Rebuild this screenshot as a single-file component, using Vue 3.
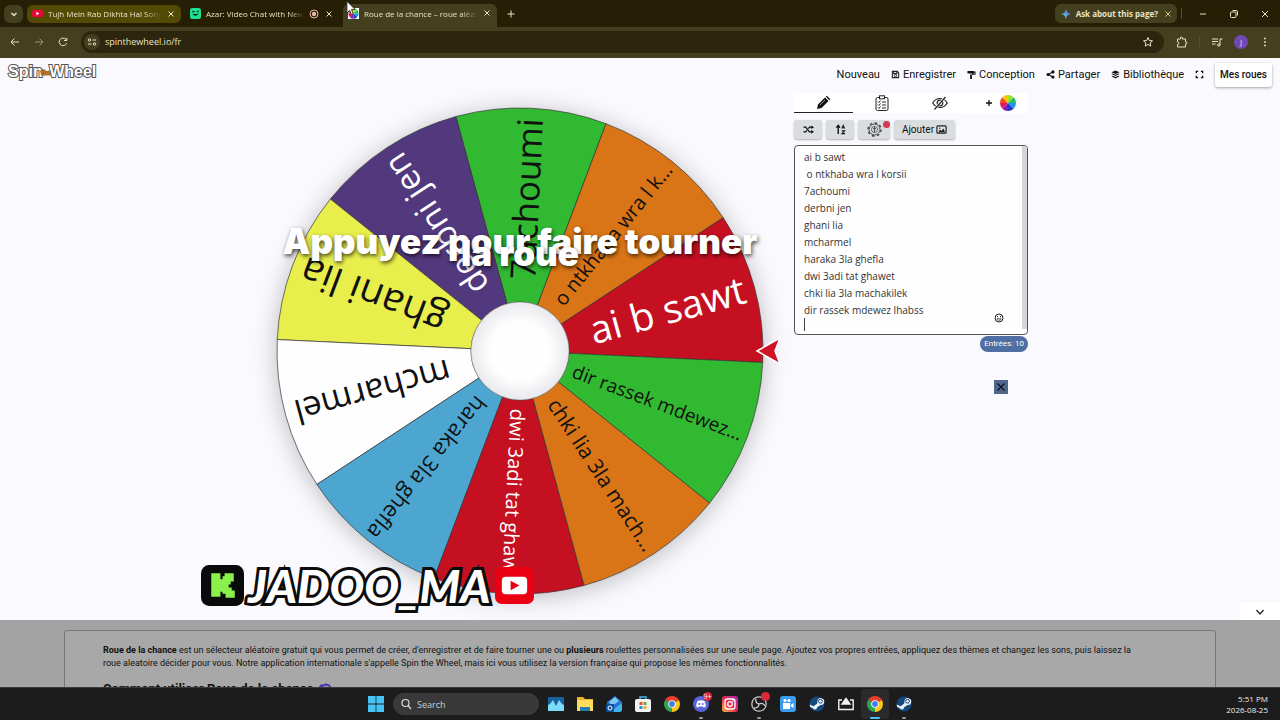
<template>
  <div class="screen">
    <header class="browser">
      <div class="tab-strip">
        <button class="tab-search" aria-label="Search tabs">
          <svg viewBox="0 0 10 10" width="10" height="10"><path d="M2.500 4 5 6.500 7.500 4" class="line line--bold" /></svg>
        </button>
        <div v-for="tab in tabs" :key="tab.title" class="tab" :class="`tab--${tab.kind}`">
          <svg v-if="tab.kind === 'music'" class="tab-icon" viewBox="0 0 12 12">
            <rect y="2" width="12" height="8" rx="2.500" fill="#e5093a" />
            <path d="M4.800 4v4l3.200-2z" fill="#fff" />
          </svg>
          <svg v-else-if="tab.kind === 'chat'" class="tab-icon" viewBox="0 0 12 12">
            <rect width="12" height="12" rx="2.500" fill="#1fe090" />
            <path d="M2.500 4h2.500M7.500 4l2-.8" stroke="#10251a" stroke-width="1.200" />
            <path d="M2.600 6.200c1.500 3.200 5.600 2.600 6.800-.6-2 1-4.500 1.200-6.800.6z" fill="#10251a" />
          </svg>
          <svg v-else class="tab-icon" viewBox="0 0 12 12">
            <rect width="12" height="12" fill="#fff" />
            <path v-for="(c, i) in rainbow" :key="c" :d="sector(i * 45, 45, 0, 5.6)" :fill="c" transform="translate(6 6)" />
          </svg>
          <span class="tab-title">{{ tab.title }}</span>
          <svg v-if="tab.kind === 'chat'" class="tab-rec" viewBox="0 0 10 10">
            <circle cx="5" cy="5" r="4" fill="none" stroke="#e8b9a0" />
            <circle cx="5" cy="5" r="2.200" fill="#e8b9a0" />
          </svg>
          <button class="tab-close" :aria-label="`Close ${tab.title}`">
            <svg viewBox="0 0 8 8" width="8" height="8"><path d="m1.500 1.500 5 5m0-5-5 5" class="line" /></svg>
          </button>
        </div>
        <button class="bare new-tab" aria-label="New tab">
          <svg viewBox="0 0 10 10" width="10" height="10"><path d="M5 1.500v7M1.500 5h7" class="line" /></svg>
        </button>
        <div class="ask">
          <svg viewBox="0 0 10 10" width="10" height="10">
            <path d="M5 0c.5 3 2 4.500 5 5-3 .5-4.500 2-5 5-.5-3-2-4.500-5-5 3-.5 4.500-2 5-5z" fill="#5b93f0" />
            <path d="M5 5 0 5c3 .5 4.500 2 5 5z" fill="#5fc183" />
          </svg>
          <span>Ask about this page?</span>
          <button class="tab-close" aria-label="Dismiss">
            <svg viewBox="0 0 8 8" width="8" height="8"><path d="m1.500 1.500 5 5m0-5-5 5" class="line line--gold" /></svg>
          </button>
        </div>
        <span class="rule"></span>
        <div class="window-controls">
          <button class="bare" aria-label="Minimize"><svg viewBox="0 0 10 10" width="10" height="10"><path d="M2 5h6" class="line" /></svg></button>
          <button class="bare" aria-label="Restore">
            <svg viewBox="0 0 10 10" width="10" height="10"><rect x="1.500" y="3" width="5.500" height="5.500" rx="1" class="line" /><path d="M3.500 1.500H7A1.500 1.500 0 0 1 8.500 3v3.500" class="line" /></svg>
          </button>
          <button class="bare" aria-label="Close"><svg viewBox="0 0 10 10" width="10" height="10"><path d="m2 2 6 6m0-6-6 6" class="line" /></svg></button>
        </div>
      </div>

      <div class="toolbar">
        <button class="bare" aria-label="Back"><svg viewBox="0 0 12 12" width="12" height="12"><path d="M10 6H2.500M5.500 2.500 2 6l3.500 3.500" class="line" /></svg></button>
        <button class="bare faded" aria-label="Forward"><svg viewBox="0 0 12 12" width="12" height="12"><path d="M2 6h7.500M6.500 2.500 10 6 6.500 9.500" class="line" /></svg></button>
        <button class="bare" aria-label="Reload"><svg viewBox="0 0 12 12" width="12" height="12"><path d="M9.600 7.200A3.800 3.800 0 1 1 9 3.500l.6.8M9.800 1.800v2.700H7.100" class="line" /></svg></button>
        <div class="omnibox">
          <button class="site-info" aria-label="Site information">
            <svg viewBox="0 0 10 10" width="10" height="10"><circle cx="2.500" cy="3" r="1.200" class="line" /><path d="M5.500 3h3.500M1 7h3.500" class="line" /><circle cx="7.500" cy="7" r="1.200" class="line" /></svg>
          </button>
          <input v-model="address" class="address" aria-label="Address" />
          <button class="bare" aria-label="Bookmark">
            <svg viewBox="0 0 12 12" width="12" height="12"><path d="m6 1.500 1.300 3 3.200.3-2.400 2.100.7 3.200L6 8.400l-2.800 1.700.7-3.200L1.500 4.800l3.200-.3z" class="line" /></svg>
          </button>
        </div>
        <div class="toolbar-end">
          <button class="bare" aria-label="Extensions">
            <svg viewBox="0 0 12 12" width="12" height="12"><path d="M1.500 3h3V2a1 1 0 0 1 2 0v1h3v3h.5a1 1 0 0 1 0 2h-.5v3h-8V8.500a1.300 1.300 0 0 0 0-2.600z" class="line" /></svg>
          </button>
          <span class="rule"></span>
          <button class="bare" aria-label="Media">
            <svg viewBox="0 0 12 12" width="12" height="12"><path d="M1 3h6M1 5.500h6M1 8h3.500M9 9V3h2.500" class="line" /><circle cx="7.800" cy="9" r="1.200" class="line" /></svg>
          </button>
          <button class="avatar">J</button>
          <button class="bare" aria-label="Menu">
            <svg viewBox="0 0 12 12" width="12" height="12" fill="#e9e3c5"><circle cx="6" cy="2.500" r=".9" /><circle cx="6" cy="6" r=".9" /><circle cx="6" cy="9.500" r=".9" /></svg>
          </button>
        </div>
      </div>
      <svg class="cursor" viewBox="0 0 12 18"><path d="M1 1v13l3-3 2 5 2-1-2-5h4z" fill="#fff" stroke="#222" /></svg>
    </header>

    <div class="page">
      <div class="app">
        <div class="site-header">
          <a class="logo" href="#" aria-label="Spin the Wheel">
            <span>Spin</span><small>the</small><span>Wheel</span>
          </a>
          <nav class="site-nav">
            <a href="#">Nouveau</a>
            <a href="#">
              <svg viewBox="0 0 10 10"><path d="M1.500 1.500h5.500l1.500 1.500v5.500h-7zM3 1.500v2.500h3.500V1.500" fill="none" stroke="#222" stroke-width="1.200" /><circle cx="5" cy="6.300" r="1.300" fill="none" stroke="#222" /></svg>
              Enregistrer
            </a>
            <a href="#">
              <svg viewBox="0 0 10 10"><path d="M.5 1h7v3h-7zM7.500 1.800H9.500v3.500H5" fill="#111" /><rect x="3.500" y="5" width="2" height="5" fill="#111" /><path d="M7.500 3h1v1.300h-1z" fill="#fafafe" /></svg>
              Conception
            </a>
            <a href="#">
              <svg viewBox="0 0 10 10" fill="#111"><circle cx="2.300" cy="5" r="1.800" /><circle cx="7.700" cy="2.200" r="1.800" /><circle cx="7.700" cy="7.800" r="1.800" /><path d="m2.300 5 5.400-2.800M2.300 5l5.400 2.800" stroke="#111" stroke-width="1.200" /></svg>
              Partager
            </a>
            <a href="#">
              <svg viewBox="0 0 10 10" fill="#111"><path d="m5 .5 4.500 2L5 4.500.5 2.500zM.5 4.500l1.300-.6L5 5.400l3.200-1.500 1.300.6L5 6.800zM.5 7l1.300-.6L5 7.900l3.200-1.500 1.300.6L5 9.500z" /></svg>
              Bibliothèque
            </a>
            <button class="bare" aria-label="Plein écran">
              <svg viewBox="0 0 10 10"><path d="M1.500 3.500v-2h2m3 0h2v2m0 3v2h-2m-3 0h-2v-2" fill="none" stroke="#111" stroke-width="1.500" /></svg>
            </button>
            <button class="my-wheels">Mes roues</button>
          </nav>
        </div>

        <main class="workspace">
          <svg class="wheel" viewBox="-258 -258 516 516" role="img" aria-label="Roue de la chance">
            <defs>
              <radialGradient id="hub">
                <stop offset="0.6" stop-color="#fefefe" />
                <stop offset="1" stop-color="#e9e9ee" />
              </radialGradient>
            </defs>
            <circle class="wheel-shadow" r="243" fill="#fff" />
            <path
              v-for="slice in slices"
              :key="slice.label"
              :d="sector(slice.angle - step / 2, step, 49, 243)"
              :fill="slice.fill"
              stroke="#333"
              stroke-opacity="0.7"
            />
            <text
              v-for="slice in slices"
              :key="slice.label"
              class="slice-label"
              :transform="`rotate(${slice.angle})`"
              :x="slice.end"
              :y="slice.size * 0.34"
              :font-size="slice.size"
              :fill="slice.ink"
            >{{ slice.label }}</text>
            <circle r="49" fill="url(#hub)" stroke="#777" stroke-opacity="0.5" />
            <path d="M237 0 260-13 255 0l5 13z" fill="#d01426" stroke="#fff" stroke-width="1.500" />
            <g class="prompt">
              <text y="-97">Appuyez pour faire tourner</text>
              <text y="-85">la roue</text>
            </g>
          </svg>

          <section class="panel">
            <div class="panel-tabs">
              <button class="panel-tab panel-tab--active" aria-label="Modifier">
                <svg viewBox="0 0 16 16"><path d="m2 14 1-4.500L10 2.500l3.500 3.500-7 7z" fill="#111" /><path d="m10.800 1.700 1-1 3.500 3.500-1 1z" fill="#111" /><path d="m5 10 5-5" stroke="#999" /></svg>
              </button>
              <button class="panel-tab" aria-label="Liste">
                <svg viewBox="0 0 16 16" fill="none" stroke="#222"><rect x="2" y="2.500" width="12" height="13" rx="1.500" /><rect x="5.500" y=".8" width="5" height="3" fill="#fff" /><path d="m4 6.500 1 1 1.500-2M4 9.500l1 1 1.500-2M4 12.500l1 1 1.500-2M8 7h4M8 10h4M8 13h4" /></svg>
              </button>
              <button class="panel-tab" aria-label="Masquer">
                <svg viewBox="0 0 16 16" fill="none" stroke="#222" stroke-width="1.200"><path d="M.8 8C4 2 12 2 15.200 8 12 14 4 14 .8 8z" /><circle cx="8" cy="8" r="2.800" /><path d="M13.500 1.500 3 14" stroke="#fff" stroke-width="2.500" /><path d="M13.500 2 2.500 14.500" /></svg>
              </button>
              <button class="panel-tab panel-tab--add" aria-label="Ajouter une roue">
                <svg class="plus" viewBox="0 0 8 8"><path d="M4 1v6M1 4h6" stroke="#111" stroke-width="1.300" /></svg>
                <svg viewBox="-8 -8 16 16"><path v-for="(c, i) in rainbow" :key="c" :d="sector(i * 45, 45, 0, 8)" :fill="c" /></svg>
              </button>
            </div>
            <div class="tools">
              <button class="tool" aria-label="Mélanger">
                <svg viewBox="0 0 12 12"><path d="M.5 3.500H3L7 8.500h3M.5 8.500H3l1.200-1.500M6 5l1-1.500h3" fill="none" stroke="#111" stroke-width="1.400" /><path d="M9 1.500v4l3-2zM9 6.500v4l3-2z" fill="#111" /></svg>
              </button>
              <button class="tool" aria-label="Trier">
                <svg viewBox="0 0 12 12" fill="none" stroke="#111"><path d="M3.500 11V2M1.500 4l2-2.500 2 2.500" stroke-width="1.500" /><path d="M7.500 5 9 1.500 10.500 5M8 4h2M7.500 7.500h3l-3 3h3.500" stroke-width="1.100" /></svg>
              </button>
              <button class="tool tool--wide" aria-label="Réglages">
                <svg class="gear" viewBox="0 0 16 16" fill="none" stroke="#444"><circle cx="8" cy="8" r="7" stroke-width="1.500" stroke-dasharray="2.800 2.700" /><circle cx="8" cy="8" r="5.800" /><circle cx="8" cy="8" r="3.300" stroke-width=".8" /><path d="M8 5v6M6.500 7h3" /></svg>
                <i class="alert"></i>
              </button>
              <button class="tool tool--add">
                Ajouter
                <svg viewBox="0 0 12 12"><rect x="1" y="2" width="10" height="8" rx="1" fill="none" stroke="#222" stroke-width="1.300" /><path d="m2.500 9 2-3L6 7.500 8 5l2 4z" fill="#222" /><circle cx="4" cy="4.500" r=".8" fill="#222" /></svg>
              </button>
            </div>
            <div class="entries">
              <textarea v-model="entries" aria-label="Entrées" spellcheck="false"></textarea>
              <span class="caret"></span>
              <span class="scroll-track"></span>
              <button class="bare emoji" aria-label="Emoji">
                <svg viewBox="0 0 10 10" fill="none" stroke="#222"><circle cx="5" cy="5" r="4" /><path d="M2.800 5.800c.8 2 3.600 2 4.400 0z" stroke-width=".7" /><path d="M3.500 3v1.200m3-1.200v1.200" /></svg>
              </button>
            </div>
            <span class="count">Entrées: {{ names.length }}</span>
            <button class="dismiss" aria-label="Fermer">
              <svg viewBox="0 0 10 10" width="10" height="10"><path d="m1.500 1.500 7 7m0-7-7 7" stroke="#0b1222" stroke-width="1.200" /></svg>
            </button>
          </section>
        </main>
        <button class="scroll-down" aria-label="Défiler">
          <svg viewBox="0 0 10 10" width="10" height="10"><path d="m1.500 3 3.500 4 3.500-4" fill="none" stroke="#222" stroke-width="1.300" /></svg>
        </button>

        <div class="watermark">
          <svg class="badge" viewBox="0 0 42 40">
            <rect width="42" height="40" rx="8" fill="#080b09" />
            <path d="M10 8h9v6h2v-3h2V8h9v8h-3v3h-2v3h3v3h3v7h-9v-4h-3v-2h-2v5h-9z" fill="#8cf04a" />
          </svg>
          <strong>JADOO_MA</strong>
          <svg class="badge badge--video" viewBox="0 0 40 38">
            <rect width="40" height="38" rx="7" fill="#ea0012" />
            <rect x="7" y="10" width="26" height="18" rx="4" fill="#fff" />
            <path d="M16 14v10l9-5z" fill="#ea0012" />
          </svg>
        </div>
      </div>

      <div class="about">
        <article>
          <p>
            <b>Roue de la chance</b> est un sélecteur aléatoire gratuit qui vous permet de créer, d'enregistrer et de faire tourner une ou
            <b>plusieurs</b> roulettes personnalisées sur une seule page. Ajoutez vos propres entrées, appliquez des thèmes et changez les sons, puis laissez la
            roue aleatoire décider pour vous. Notre application internationale s'appelle Spin the Wheel, mais ici vous utilisez la version française qui propose les mêmes fonctionnalités.
          </p>
          <h2>
            Comment utiliser Roue de la chance
            <svg viewBox="0 0 14 12" fill="none" stroke="#4a36a8" stroke-width="2"><circle cx="8" cy="6" r="4.500" /><circle cx="8" cy="6" r="1.500" /><path d="M1 9c0-4 1-6 3-7" /></svg>
          </h2>
        </article>
      </div>
    </div>

    <footer class="taskbar">
      <div class="task-icons">
        <button class="task" aria-label="Start">
          <svg viewBox="0 0 16 16" fill="#45c3f4"><path d="M0 0h7.600v7.600H0zM8.400 0H16v7.600H8.400zM0 8.400h7.600V16H0zM8.400 8.400H16V16H8.400z" /></svg>
        </button>
        <label class="search">
          <svg viewBox="0 0 12 12" width="12" height="12" fill="none" stroke="#ddd" stroke-width="1.200"><circle cx="5.500" cy="5" r="3.500" /><path d="m8 7.500 3 3.500" /></svg>
          <input type="text" placeholder="Search" aria-label="Search" />
        </label>
        <button v-for="(app, i) in apps" :key="i" class="task" :class="{ 'task--open': app.open, 'task--active': app.active }" :aria-label="app.name">
          <svg v-if="app.name === 'Monitor'" viewBox="0 0 16 16"><rect y="1" width="16" height="14" rx="1" fill="#17639b" /><path d="M0 15V9l2-1 3-4 2 4 1 2 1-2 2-4 3 4 2 1v6z" fill="#7cdcfb" /></svg>
          <svg v-else-if="app.name === 'Files'" viewBox="0 0 16 16"><path d="M0 1h6l2 2h8v12H0z" fill="#e9b52c" /><path d="M0 4h16v11H0z" fill="#ffdb5e" /><path d="M3 15v-4h10v4z" fill="#237fb3" /></svg>
          <svg v-else-if="app.name === 'Outlook'" viewBox="0 0 16 16"><path d="m1 6 8-6 7 6v8a2 2 0 0 1-2 2H3a2 2 0 0 1-2-2z" fill="#2473ce" /><path d="m3 6 6-5 4 4-7 5z" fill="#7cc8f5" /><path d="m16 7-12 9h10l2-2z" fill="#45b2ec" /><rect y="8" width="8" height="8" rx="1" fill="#0c4e9c" /><circle cx="4" cy="12" r="2" fill="none" stroke="#fff" /></svg>
          <svg v-else-if="app.name === 'Store'" viewBox="0 0 16 16"><path d="M5 4V1h6v3" fill="none" stroke="#46b5ed" stroke-width="1.500" /><rect y="3" width="16" height="13" rx="2" fill="#f1f2f4" /><path d="M4.500 6h3v3h-3z" fill="#e5532c" /><path d="M8.500 6h3v3h-3z" fill="#6ca62c" /><path d="M4.500 10h3v3h-3z" fill="#2a91d8" /><path d="M8.500 10h3v3h-3z" fill="#eeb424" /></svg>
          <svg v-else-if="app.name === 'Chrome'" viewBox="-8 -8 16 16"><path d="M0 0-6.900-4A8 8 0 0 1 6.900-4z" fill="#e5402f" /><path d="M0 0 6.900-4A8 8 0 0 1 0 8z" fill="#fbc61a" /><path d="M0 0v8a8 8 0 0 1-6.900-12z" fill="#2fa451" /><circle r="3.800" fill="#fff" /><circle r="2.900" fill="#3f7fe8" /></svg>
          <svg v-else-if="app.name === 'Discord'" viewBox="0 0 16 16"><circle cx="8" cy="8" r="8" fill="#5865d8" /><path d="M4.500 5Q8 3.500 11.500 5q1.500 3 1.300 5.500l-2 1.200-.8-1.200H6l-.8 1.200-2-1.200Q3 8 4.500 5z" fill="#fff" /><circle cx="6.300" cy="8" r="1" fill="#5865d8" /><circle cx="9.700" cy="8" r="1" fill="#5865d8" /></svg>
          <svg v-else-if="app.name === 'Instagram'" viewBox="0 0 16 16"><defs><linearGradient id="insta" x1="0" y1="1" x2="1" y2="0"><stop stop-color="#fdbb45" /><stop offset=".5" stop-color="#e8274f" /><stop offset="1" stop-color="#a32bb6" /></linearGradient></defs><rect width="16" height="16" rx="3" fill="url(#insta)" /><g fill="none" stroke="#fff" stroke-width="1.300"><rect x="3" y="3" width="10" height="10" rx="2.500" /><circle cx="8" cy="8" r="2.300" /></g><circle cx="11" cy="5" r=".7" fill="#fff" /></svg>
          <svg v-else-if="app.name === 'OBS'" viewBox="0 0 16 16"><g fill="none" stroke="#c9c9c9" stroke-width="1.300"><circle cx="8" cy="8" r="7.200" /><path d="M8 8q-4-1-3-5M8 8q4-2 6 2M8 8q0 4-5 4" /></g></svg>
          <svg v-else-if="app.name === 'Camera'" viewBox="0 0 16 16"><rect width="16" height="16" rx="3" fill="#3b9cf0" /><path d="M3 7h7v6H3zM10.500 9l3-2v5l-3-2z" fill="#fff" /><circle cx="5" cy="4.500" r="1.600" fill="#fff" /><circle cx="9" cy="4.500" r="1.600" fill="#fff" /></svg>
          <svg v-else-if="app.name === 'Steam'" viewBox="0 0 16 16"><circle cx="8" cy="8" r="7.500" fill="#14477c" /><path d="m.6 8.500 4 1.700 3.600-2.800.3-2.400a3.400 3.400 0 1 1 3 3.900L8.200 11.200a2.400 2.400 0 0 1-4.600.9L1.200 11z" fill="#eaf2f8" /><circle cx="11.500" cy="5.300" r="1.900" fill="none" stroke="#14477c" /></svg>
          <svg v-else viewBox="0 0 16 16" fill="none" stroke="#f1f1f1" stroke-width="1.400"><path d="M4 4H.8v9.500h14.400V4H12" /><path d="M8 2.500 12 8H4z" fill="#f1f1f1" /></svg>
          <span v-if="app.badge !== undefined" class="task-badge">{{ app.badge }}</span>
        </button>
      </div>
      <time class="clock" datetime="2026-08-25T17:51"><span>5:51 PM</span><span>2026-08-25</span></time>
    </footer>
  </div>
</template>

<script setup>
import { ref, computed } from "vue";

const tabs = [
  { kind: "music", title: "Tujh Mein Rab Dikhta Hai Song" },
  { kind: "chat", title: "Azar: Video Chat with New" },
  { kind: "wheel", title: "Roue de la chance – roue aléato" }
];

const address = ref("spinthewheel.io/fr");

const entries = ref(
  [
    "ai b sawt",
    " o ntkhaba wra l korsii",
    "7achoumi",
    "derbni jen",
    "ghani lia",
    "mcharmel",
    "haraka 3la ghefla",
    "dwi 3adi tat ghawet",
    "chki lia 3la machakilek",
    "dir rassek mdewez lhabss",
    ""
  ].join("\n")
);

const palette = [
  { fill: "#c51022", ink: "#fff" },
  { fill: "#d97516", ink: "#111" },
  { fill: "#32b932", ink: "#111" },
  { fill: "#52387d", ink: "#fff" },
  { fill: "#e8ef4c", ink: "#111" },
  { fill: "#fefefe", ink: "#111" },
  { fill: "#4ca6d0", ink: "#111" }
];

const labelSizes = [39, 20, 35, 34, 39, 34, 22, 20, 21, 19];

const rainbow = ["#2196e8", "#2638c8", "#7a1fb0", "#e01860", "#f04a18", "#ffc400", "#9be02a", "#20c060"];

const names = computed(() =>
  entries.value
    .split("\n")
    .map((name) => name.trim())
    .filter(Boolean)
);

const step = computed(() => 360 / names.value.length);

const slices = computed(() =>
  names.value.map((name, i) => {
    const label = name.length > 17 ? `${name.slice(0, 17)}...` : name;
    return {
      label,
      angle: -15.3 - i * step.value,
      size: labelSizes[i] ?? 20,
      end: label.length > 14 ? 237 : 233,
      ...palette[i % palette.length]
    };
  })
);

const point = (deg, r) => {
  const a = (deg * Math.PI) / 180;
  return `${(r * Math.cos(a)).toFixed(2)} ${(r * Math.sin(a)).toFixed(2)}`;
};

// ring segment starting at `start` degrees, clockwise
const sector = (start, sweep, inner, outer) =>
  `M${point(start, inner)}L${point(start, outer)}` +
  `A${outer} ${outer} 0 0 1 ${point(start + sweep, outer)}` +
  `L${point(start + sweep, inner)}` +
  (inner ? `A${inner} ${inner} 0 0 0 ${point(start, inner)}Z` : "Z");

const apps = [
  { name: "Monitor" },
  { name: "Files" },
  { name: "Outlook" },
  { name: "Store" },
  { name: "Chrome" },
  { name: "Discord", open: true, badge: "9+" },
  { name: "Instagram" },
  { name: "OBS", open: true, badge: "" },
  { name: "Camera" },
  { name: "Steam" },
  { name: "Cast" },
  { name: "Chrome", open: true, active: true },
  { name: "Steam", open: true }
];
</script>

<style>
body {
  overflow: hidden;
}
</style>

<style scoped>
* {
  box-sizing: border-box;
}

.screen {
  height: 100vh;
  display: flex;
  flex-direction: column;
  font-family: Roboto, "Liberation Sans", sans-serif;
  color: #111;
}

button {
  display: flex;
  align-items: center;
  justify-content: center;
  padding: 0;
  border: 0;
  background: none;
  font: inherit;
  color: inherit;
}

svg {
  display: block;
  flex: none;
}

.line {
  fill: none;
  stroke: #e9e3c5;
}

.line--bold {
  stroke-width: 1.5;
}

.line--gold {
  stroke: #d6cb6c;
}

/* browser */
.browser {
  position: relative;
  background: #261f06;
  color: #e9e3c5;
  font-family: "Open Sans", "Noto Sans", sans-serif;
  font-size: 9px;
}

.tab-strip {
  display: flex;
  align-items: center;
  gap: 4px;
  height: 27px;
  padding: 0 10px 0 4px;
  font-size: 8px;
}

.tab-search {
  width: 19px;
  height: 18px;
  border-radius: 6px;
  background: #443f1f;
}

.tab {
  display: flex;
  align-items: center;
  gap: 5px;
  width: 154px;
  height: 18px;
  padding: 0 6px 0 5px;
  border-radius: 6px;
}

.tab--music {
  background: #524a05;
}

.tab--wheel {
  align-self: flex-end;
  height: 23px;
  padding-bottom: 5px;
  border-radius: 6px 6px 0 0;
  background: #443f1f;
}

.tab-icon {
  width: 11px;
  height: 11px;
}

.tab-title {
  flex: 1;
  overflow: hidden;
  white-space: nowrap;
  mask-image: linear-gradient(to right, #000 86%, transparent);
}

.tab-rec {
  width: 10px;
  height: 10px;
}

.tab-close {
  width: 9px;
  height: 12px;
}

.new-tab {
  margin-left: 5px;
}

.ask {
  display: flex;
  align-items: center;
  gap: 5px;
  height: 19px;
  margin-left: auto;
  padding: 0 5px 0 6px;
  border-radius: 6px;
  background: #443f1f;
  font-weight: 700;
}

.rule {
  width: 1px;
  height: 11px;
  background: #57502c;
}

.window-controls {
  display: flex;
  gap: 21px;
  margin-left: 12px;
}

.toolbar {
  display: flex;
  align-items: center;
  gap: 12px;
  height: 31px;
  padding: 0 9px 2px;
  background: #443f1f;
}

.toolbar-end {
  display: flex;
  align-items: center;
  gap: 11px;
}

.faded {
  opacity: 0.5;
}

.omnibox {
  flex: 1;
  display: flex;
  align-items: center;
  gap: 5px;
  height: 22px;
  padding: 0 10px 0 3px;
  border-radius: 11px;
  background: #2d260e;
}

.site-info {
  width: 16px;
  height: 16px;
  border-radius: 50%;
  background: #443f1f;
}

.address {
  flex: 1;
  min-width: 0;
  padding: 0;
  border: 0;
  outline: 0;
  background: none;
  color: inherit;
  font: inherit;
}

.avatar {
  width: 14px;
  height: 14px;
  border-radius: 50%;
  background: #7147b5;
  font-size: 8px;
}

.cursor {
  position: absolute;
  top: 0;
  left: 346px;
  width: 11px;
  height: 17px;
}

/* page */
.page {
  flex: 1;
  min-height: 0;
  overflow: hidden;
  background: #a3a3a3;
}

.app {
  position: relative;
  background: #fafafe;
}

.site-header {
  display: flex;
  align-items: center;
  justify-content: space-between;
  height: 33px;
  padding: 0 8px;
}

.logo {
  display: flex;
  align-items: center;
  margin-top: -5px;
  font: bold 16px "Liberation Sans", Arial, sans-serif;
  color: #fff;
  text-decoration: none;
  -webkit-text-stroke: 2px #555;
  paint-order: stroke;
}

.logo small {
  margin: 0 -2px;
  font-size: 7px;
  color: #d08a1c;
  -webkit-text-stroke: 1px #6b4a17;
}

.site-nav {
  display: flex;
  align-items: center;
  gap: 11px;
  font-size: 11px;
}

.site-nav a {
  display: flex;
  align-items: center;
  gap: 3px;
  color: inherit;
  text-decoration: none;
}

.site-nav svg {
  width: 9px;
  height: 9px;
}

.my-wheels {
  height: 24px;
  padding: 0 5px;
  border-radius: 3px;
  background: #fff;
  box-shadow: 0 1px 3px rgba(0, 0, 0, 0.35);
  font-size: 10px;
  font-weight: 500;
}

.workspace {
  display: flex;
  justify-content: center;
  gap: 16px;
  height: 529px;
  padding: 2px 0 0 10px;
}

.wheel {
  width: 516px;
  height: 516px;
  overflow: visible;
}

.wheel-shadow {
  filter: drop-shadow(0 3px 12px rgba(0, 0, 0, 0.25));
}

.slice-label {
  font-family: "Open Sans", "Noto Sans", sans-serif;
  text-anchor: end;
}

.prompt {
  fill: #fff;
  font: 900 35px Inter, "Open Sans", sans-serif;
  text-anchor: middle;
  text-shadow: 1px 2px 4px rgba(0, 0, 0, 0.7);
}

.panel {
  display: flex;
  flex-direction: column;
  width: 234px;
}

.panel-tabs {
  display: grid;
  grid-template-columns: repeat(4, 1fr);
  height: 20px;
  background: #fff;
}

.panel-tab {
  gap: 7px;
}

.panel-tab svg {
  width: 16px;
  height: 16px;
}

.panel-tab .plus {
  width: 8px;
  height: 8px;
}

.panel-tab--active {
  border-bottom: 1px solid #222;
}

.panel-tab--add {
  padding-left: 4px;
}

.tools {
  display: flex;
  gap: 4px;
  margin: 7px 0 6px;
}

.tool {
  position: relative;
  gap: 2px;
  width: 28px;
  height: 19px;
  border-radius: 3px;
  background: #dadde0;
  box-shadow: 0 1px 2px rgba(0, 0, 0, 0.3);
  font-size: 10px;
}

.tool svg {
  width: 11px;
  height: 11px;
}

.tool .gear {
  width: 15px;
  height: 15px;
}

.tool--wide {
  width: 32px;
}

.tool--add {
  width: 61px;
}

.alert {
  position: absolute;
  top: 1px;
  right: 0;
  width: 7px;
  height: 7px;
  border-radius: 50%;
  background: #d43a55;
}

.entries {
  position: relative;
  height: 190px;
}

.entries textarea {
  display: block;
  width: 100%;
  height: 100%;
  padding: 3px 9px 0;
  border: 1px solid #555;
  border-radius: 4px;
  outline: 0;
  background: #fefefe;
  color: #333;
  font: 10px/17px "Open Sans", "Noto Sans", sans-serif;
  resize: none;
  overflow-y: hidden;
}

.caret {
  position: absolute;
  left: 10px;
  bottom: 4px;
  width: 1px;
  height: 13px;
  background: #444;
}

.scroll-track {
  position: absolute;
  top: 1px;
  right: 1px;
  bottom: 6px;
  width: 5px;
  border-radius: 0 3px 0 0;
  background: #d6d6d9;
}

.emoji {
  position: absolute;
  right: 24px;
  bottom: 12px;
}

.emoji svg {
  width: 10px;
  height: 10px;
}

.count {
  align-self: flex-end;
  margin-top: 1px;
  padding: 0 4px;
  border-radius: 8px;
  background: #4f6ea3;
  color: #fff;
  font-size: 8px;
  line-height: 16px;
}

.dismiss {
  align-self: flex-end;
  width: 14px;
  height: 14px;
  margin: 28px 20px 0 0;
  background: #50658a;
}

.scroll-down {
  position: absolute;
  right: 0;
  bottom: 0;
  width: 40px;
  height: 17px;
  background: #fff;
}

.watermark {
  position: absolute;
  left: 201px;
  bottom: 14px;
  display: flex;
  align-items: center;
  gap: 4px;
}

.watermark strong {
  color: #fff;
  font: italic 900 46px/40px Lato, "Open Sans", sans-serif;
  -webkit-text-stroke: 6px #0c0c0c;
  paint-order: stroke;
  text-shadow: 1px 2px 0 #0c0c0c;
}

.badge {
  width: 43px;
  height: 41px;
}

.badge--video {
  width: 39px;
  height: 37px;
}

.about {
  padding: 10px 64px 0;
}

.about article {
  height: 200px;
  padding: 13px 68px 0 38px;
  border: 1px solid #777;
  border-radius: 3px;
  background: #a8a8a8;
}

.about p {
  margin: 0;
  font-size: 9px;
  line-height: 13px;
}

.about h2 {
  display: flex;
  align-items: center;
  gap: 5px;
  margin: 11px 0 0;
  font-size: 13px;
  line-height: 16px;
}

.about h2 svg {
  width: 14px;
  height: 12px;
}

/* taskbar */
.taskbar {
  display: flex;
  align-items: center;
  justify-content: center;
  position: relative;
  height: 33px;
  border-top: 1px solid #3a3a3a;
  background: #1c1c1c;
  color: #eee;
  font-family: "Open Sans", "Noto Sans", sans-serif;
}

.task-icons {
  display: flex;
  align-items: center;
  gap: 1px;
}

.task {
  position: relative;
  width: 28px;
  height: 30px;
  border-radius: 3px;
}

.task svg {
  width: 16px;
  height: 16px;
}

.task--open::after {
  content: "";
  position: absolute;
  bottom: 0;
  width: 4px;
  height: 2px;
  border-radius: 1px;
  background: #999;
}

.task--active {
  background: #2b2b2b;
}

.task--active::after {
  width: 10px;
  background: #4cc2f5;
}

.task-badge {
  position: absolute;
  top: 3px;
  right: 3px;
  min-width: 9px;
  height: 9px;
  border-radius: 5px;
  background: #d9293c;
  font-size: 7px;
  line-height: 9px;
}

.search {
  display: flex;
  align-items: center;
  gap: 5px;
  width: 146px;
  height: 22px;
  margin: 0 2px;
  padding: 0 7px;
  border-radius: 11px;
  background: #393939;
}

.search input {
  width: 100%;
  padding: 0;
  border: 0;
  outline: 0;
  background: none;
  color: #ddd;
  font: inherit;
  font-size: 9px;
}

.search input::placeholder {
  color: #ccc;
}

.clock {
  position: absolute;
  right: 12px;
  display: flex;
  flex-direction: column;
  align-items: flex-end;
  font-size: 8px;
  line-height: 11px;
}
</style>
